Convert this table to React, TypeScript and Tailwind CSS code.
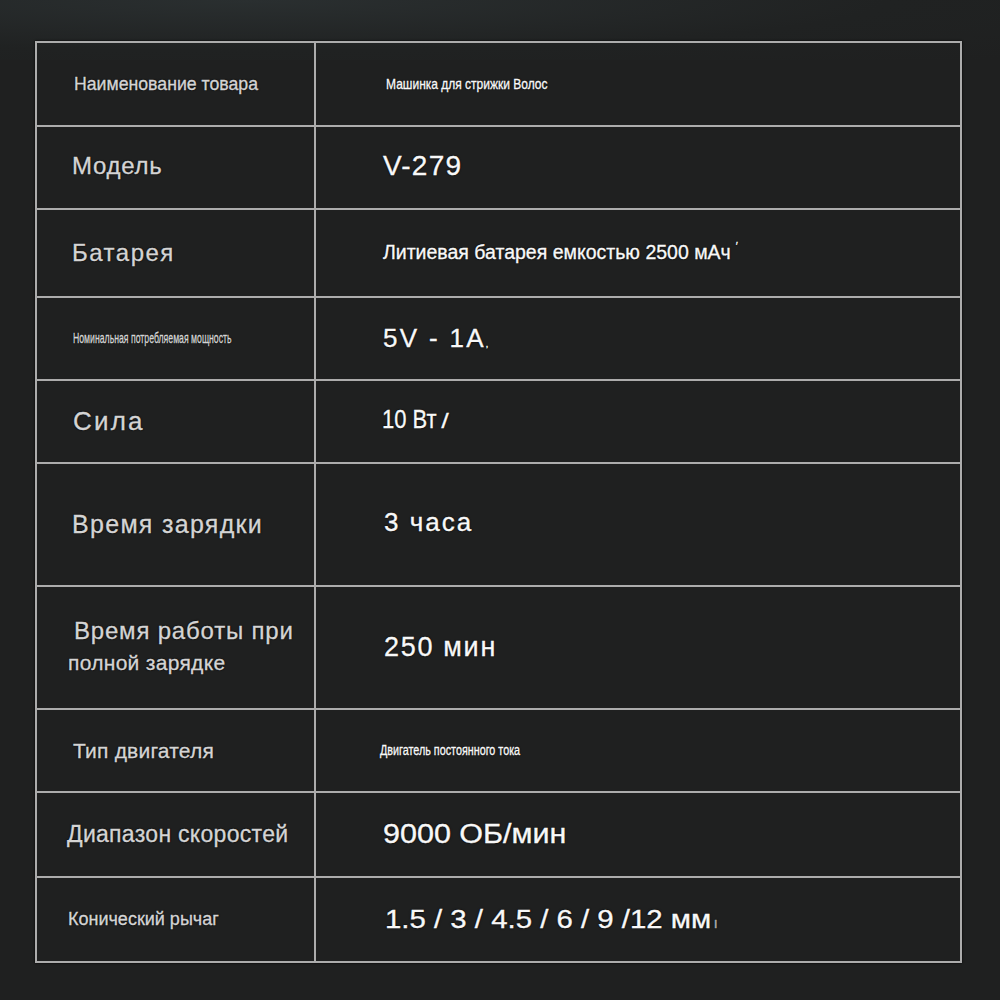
import React from "react";

type Row = {
  h: string;
  left: React.ReactNode;
  right: React.ReactNode;
};

const L =
  "text-[#d4d4d4] [text-shadow:0_0_2px_#000,0_0_1px_#000] [-webkit-text-stroke:0.35px_currentcolor]";
const R =
  "text-[#f8f8f8] [text-shadow:0_0_2px_#000,0_0_1px_#000] [-webkit-text-stroke:0.35px_currentcolor]";

const rows: Row[] = [
  {
    h: "h-[84px]",
    left: <span className={`${L} ml-[37px] text-[17.7px]`}>Наименование товара</span>,
    right: (
      <span className={`${R} ml-[70px] inline-block origin-left scale-x-[0.8] text-[15px] whitespace-nowrap`}>
        Машинка для стрижки Волос
      </span>
    ),
  },
  {
    h: "h-[83px]",
    left: <span className={`${L} ml-[35px] text-[24px] tracking-[0.7px] -mt-[3px]`}>Модель</span>,
    right: <span className={`${R} ml-[67px] text-[28px] tracking-[1.2px] -mt-[4px]`}>V-279</span>,
  },
  {
    h: "h-[88px]",
    left: <span className={`${L} ml-[35px] text-[24px] tracking-[1.5px]`}>Батарея</span>,
    right: (
      <span className={`${R} ml-[67px] text-[19.5px] whitespace-nowrap`}>
        Литиевая батарея емкостью 2500 мАч<span className="ml-[5px] text-[11px] align-top">′</span>
      </span>
    ),
  },
  {
    h: "h-[83px]",
    left: (
      <span className={`${L} ml-[36px] inline-block origin-left scale-x-[0.58] text-[15px] whitespace-nowrap`}>
        Номинальная потребляемая мощность
      </span>
    ),
    right: (
      <span className={`${R} ml-[67px] text-[26px] tracking-[2.3px] whitespace-nowrap`}>
        5V - 1A<span className="ml-[0px] text-[9px]">,</span>
      </span>
    ),
  },
  {
    h: "h-[83px]",
    left: <span className={`${L} ml-[36px] text-[26px] tracking-[2.2px]`}>Сила</span>,
    right: (
      <span className={`${R} ml-[66px] inline-block origin-left scale-x-[0.88] text-[25px] whitespace-nowrap -mt-[4px]`}>
        10 Вт<span className="ml-[6px] font-bold italic text-[21px]">/</span>
      </span>
    ),
  },
  {
    h: "h-[123px]",
    left: <span className={`${L} ml-[35px] text-[25px] tracking-[1.3px]`}>Время зарядки</span>,
    right: <span className={`${R} ml-[68px] text-[26px] tracking-[2px] -mt-[4px]`}>3 часа</span>,
  },
  {
    h: "h-[123px]",
    left: (
      <div className={`${L} flex flex-col -mt-[1px]`}>
        <span className="ml-[37px] text-[24px] tracking-[0.8px] leading-[32px]">Время работы при</span>
        <span className="ml-[31px] text-[21px] tracking-[0.3px] leading-[32px]">полной зарядке</span>
      </div>
    ),
    right: <span className={`${R} ml-[68px] text-[27px] tracking-[1.7px]`}>250 мин</span>,
  },
  {
    h: "h-[83px]",
    left: <span className={`${L} ml-[36px] text-[21px] tracking-[0.2px]`}>Тип двигателя</span>,
    right: (
      <span className={`${R} ml-[64px] inline-block origin-left scale-x-[0.77] text-[14px] whitespace-nowrap`}>
        Двигатель постоянного тока
      </span>
    ),
  },
  {
    h: "h-[85px]",
    left: (
      <span className={`${L} ml-[30px] text-[23px] tracking-[0.3px] whitespace-nowrap`}>
        Диапазон скоростей
      </span>
    ),
    right: (
      <span className={`${R} ml-[67px] inline-block origin-left scale-x-[1.13] text-[27px] whitespace-nowrap`}>
        9000 ОБ/мин
      </span>
    ),
  },
  {
    h: "h-[83px]",
    left: (
      <span className={`${L} ml-[31px] text-[18px] whitespace-nowrap`}>
        Конический рычаг
      </span>
    ),
    right: (
      <span className={`${R} ml-[69px] inline-block origin-left scale-x-[1.13] text-[26px] whitespace-nowrap`}>
        1.5 / 3 / 4.5 / 6 / 9 /12 мм<span className="ml-[2px] text-[14px] text-[#aaa]">ı</span>
      </span>
    ),
  },
];

export default function App() {
  return (
    <div
      className="relative w-[1000px] h-[1000px] overflow-hidden bg-[#1f2020] pt-[41px] pl-[35px]"
      style={{ fontFamily: '"Liberation Sans", Arial, sans-serif' }}
    >
      <div className="absolute left-0 top-0 w-[1000px] h-[60px] bg-[radial-gradient(ellipse_at_25%_0%,#2a2f30_0%,#202222_60%,transparent_100%)] pointer-events-none" />
      <div className="relative w-[927px] border-2 border-[#acacac] shadow-[0_0_2px_#000]">
        {rows.map((r, i) => (
          <div
            key={i}
            className={`flex ${r.h} ${i < rows.length - 1 ? "border-b-2 border-[#acacac]" : ""}`}
          >
            <div className="w-[279px] flex items-center border-r-2 border-[#acacac]">{r.left}</div>
            <div className="flex-1 flex items-center">{r.right}</div>
          </div>
        ))}
      </div>
    </div>
  );
}
